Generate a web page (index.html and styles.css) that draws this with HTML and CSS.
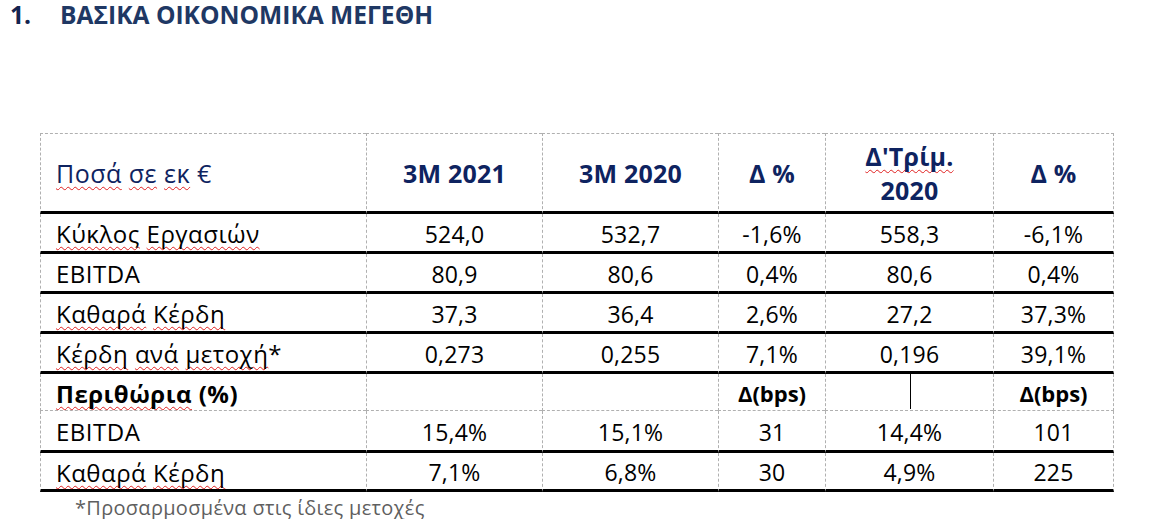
FILE: index.html
```html
<!DOCTYPE html>
<html lang="el">
<head>
<meta charset="utf-8">
<title>Βασικά οικονομικά μεγέθη</title>
<link rel="stylesheet" href="styles.css">
</head>
<body>
<h1 class="title"><span class="num">1.</span><span class="ttext">ΒΑΣΙΚΑ ΟΙΚΟΝΟΜΙΚΑ ΜΕΓΕΘΗ</span></h1>
<div class="wrap">
  <div class="grid">
    <div class="row head">
      <div class="cell label hlabel"><span class="txt"><span class="sp">Ποσά</span> <span class="sp">σε</span> <span class="sp">εκ</span> €</span></div>
      <div class="cell hb">3M 2021</div>
      <div class="cell hb">3M 2020</div>
      <div class="cell hb">Δ %</div>
      <div class="cell hb two"><div class="txt"><span class="sp">Δ'Τρίμ.</span><br>2020</div></div>
      <div class="cell hb last">Δ %</div>
    </div>
    <div class="row data">
      <div class="cell label"><span class="txt"><span class="sp">Κύκλος</span> <span class="sp">Εργασιών</span></span></div>
      <div class="cell">524,0</div>
      <div class="cell">532,7</div>
      <div class="cell">-1,6%</div>
      <div class="cell">558,3</div>
      <div class="cell last">-6,1%</div>
    </div>
    <div class="row data">
      <div class="cell label"><span class="txt">EBITDA</span></div>
      <div class="cell">80,9</div>
      <div class="cell">80,6</div>
      <div class="cell">0,4%</div>
      <div class="cell">80,6</div>
      <div class="cell last">0,4%</div>
    </div>
    <div class="row data">
      <div class="cell label"><span class="txt"><span class="sp">Καθαρά</span> <span class="sp">Κέρδη</span></span></div>
      <div class="cell">37,3</div>
      <div class="cell">36,4</div>
      <div class="cell">2,6%</div>
      <div class="cell">27,2</div>
      <div class="cell last">37,3%</div>
    </div>
    <div class="row data">
      <div class="cell label"><span class="txt"><span class="sp">Κέρδη</span> <span class="sp">ανά</span> <span class="sp">μετοχή</span>*</span></div>
      <div class="cell">0,273</div>
      <div class="cell">0,255</div>
      <div class="cell">7,1%</div>
      <div class="cell">0,196</div>
      <div class="cell last">39,1%</div>
    </div>
    <div class="row margins">
      <div class="cell label bold"><span class="txt"><span class="sp">Περιθώρια</span> (%)</span></div>
      <div class="cell"></div>
      <div class="cell"></div>
      <div class="cell bold bps">Δ(bps)</div>
      <div class="cell split"><div class="half"></div></div>
      <div class="cell bold bps last">Δ(bps)</div>
    </div>
    <div class="row data tall">
      <div class="cell label"><span class="txt">EBITDA</span></div>
      <div class="cell">15,4%</div>
      <div class="cell">15,1%</div>
      <div class="cell">31</div>
      <div class="cell">14,4%</div>
      <div class="cell last">101</div>
    </div>
    <div class="row data lastrow">
      <div class="cell label"><span class="txt"><span class="sp">Καθαρά</span> <span class="sp">Κέρδη</span></span></div>
      <div class="cell">7,1%</div>
      <div class="cell">6,8%</div>
      <div class="cell">30</div>
      <div class="cell">4,9%</div>
      <div class="cell last">225</div>
    </div>
  </div>
  <p class="note">*Προσαρμοσμένα στις ίδιες μετοχές</p>
</div>
</body>
</html>
```

FILE: styles.css
```css
html, body {
  margin: 0;
  padding: 0;
  background: #ffffff;
}

body {
  font-family: "Open Sans", "Noto Sans", "DejaVu Sans", sans-serif;
  color: #000;
}

.title {
  margin: 0;
  padding-left: 10px;
  font-size: 24.6px;
  line-height: 30px;
  font-weight: 700;
  color: #1f3864;
  display: flex;
}

.title .num {
  width: 50px;
  color: #14244f;
}

.wrap {
  margin-top: 103px;
  margin-left: 40px;
}

.grid {
  width: 1074px;
}

.row {
  display: grid;
  grid-template-columns: 326px 176px 176px 107px 168px 121px;
}

.cell {
  box-sizing: border-box;
  border-left: 1px dashed #b0b0b0;
  border-bottom: 3px solid #000;
  display: flex;
  align-items: center;
  justify-content: center;
  font-size: 23px;
  letter-spacing: 0.2px;
  padding-top: 2px;
  white-space: nowrap;
}

.cell.last {
  border-right: 1px dashed #b0b0b0;
}

.cell.label {
  justify-content: flex-start;
  padding-left: 15px;
  font-size: 24px;
  letter-spacing: 0.5px;
}

.head .cell {
  height: 81px;
  border-top: 1px dashed #b0b0b0;
  color: #0e2360;
  font-size: 25px;
  letter-spacing: 0.2px;
  padding-top: 0;
}

.head .cell.label {
  letter-spacing: 0.5px;
}

.head .hb {
  font-weight: 700;
}

.head .two .txt {
  text-align: center;
  line-height: 34px;
}

.data .cell {
  height: 40px;
}

.margins .cell {
  height: 37px;
  border-bottom: 1px dashed #b0b0b0;
  align-items: stretch;
}

.margins .cell.bold,
.margins .cell.label {
  align-items: center;
}

.bold {
  font-weight: 700;
}

.cell.bps {
  font-size: 22px;
  letter-spacing: 0;
}

.split {
  justify-content: flex-start;
  padding-top: 0;
}

.split .half {
  width: 50%;
  margin-bottom: 1px;
  border-right: 1px solid #000;
}

.data.tall .cell {
  height: 42px;
}

.data.lastrow .cell {
  height: 39px;
}

.sp {
  text-decoration: underline wavy #e02020;
  text-decoration-thickness: 1px;
  text-underline-offset: 3px;
  text-decoration-skip-ink: none;
}

.note {
  margin: 5px 0 0 0;
  padding-left: 35px;
  font-size: 20px;
  line-height: 22px;
  letter-spacing: 0.3px;
  color: #5f5f5f;
}
```
